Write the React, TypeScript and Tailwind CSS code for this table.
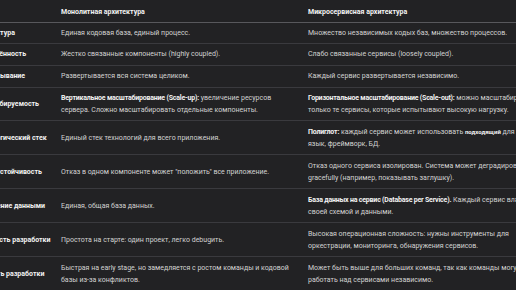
import React from "react";

type Row = {
  aspect: string;
  mono: React.ReactNode;
  micro: React.ReactNode;
};

function B({ children }: { children: React.ReactNode }) {
  return <b className="font-bold tracking-[-0.2px] text-[#f2f2f2]">{children}</b>;
}

const rows: Row[] = [
  {
    aspect: "Архитектура",
    mono: "Единая кодовая база, единый процесс.",
    micro: "Множество независимых кодых баз, множество процессов.",
  },
  {
    aspect: "Сопряжённость",
    mono: "Жестко связанные компоненты (highly coupled).",
    micro: "Слабо связанные сервисы (loosely coupled).",
  },
  {
    aspect: "Развертывание",
    mono: "Развертывается вся система целиком.",
    micro: "Каждый сервис развертывается независимо.",
  },
  {
    aspect: "Масштабируемость",
    mono: (
      <>
        <B>Вертикальное масштабирование (Scale-up):</B> увеличение ресурсов сервера. Сложно
        масштабировать отдельные компоненты.
      </>
    ),
    micro: (
      <>
        <B>Горизонтальное масштабирование (Scale-out):</B> можно масштабировать только те сервисы,
        которые испытывают высокую нагрузку.
      </>
    ),
  },
  {
    aspect: "Технологический стек",
    mono: "Единый стек технологий для всего приложения.",
    micro: (
      <>
        <B>Полиглот:</B> каждый сервис может использовать{" "}
        <b className="font-bold text-[6px] text-[#f2f2f2]">подходящий</b> для его задач язык,
        фреймворк, БД.
      </>
    ),
  },
  {
    aspect: "Отказоустойчивость",
    mono: "Отказ в одном компоненте может \"положить\" все приложение.",
    micro:
      "Отказ одного сервиса изолирован. Система может деградировать gracefully (например, показывать заглушку).",
  },
  {
    aspect: "Управление данными",
    mono: "Единая, общая база данных.",
    micro: (
      <>
        <B>База данных на сервис (Database per Service).</B> Каждый сервис владеет своей схемой и
        данными.
      </>
    ),
  },
  {
    aspect: "Сложность разработки",
    mono: "Простота на старте: один проект, легко debugить.",
    micro:
      "Высокая операционная сложность: нужны инструменты для оркестрации, мониторинга, обнаружения сервисов.",
  },
  {
    aspect: "Скорость разработки",
    mono: "Быстрая на early stage, но замедляется с ростом команды и кодовой базы из-за конфликтов.",
    micro: "Может быть выше для больших команд, так как команды могут работать над сервисами независимо.",
  },
];

export default function App() {
  return (
    <div
      className="w-[516px] h-[290px] overflow-hidden bg-[#222224] text-[#d2d2d2]"
      style={{ fontFamily: 'Roboto, "Noto Sans", sans-serif' }}
    >
      <table className="-ml-[35px] w-[594px] table-fixed border-collapse text-[7px] leading-[12.3px]">
        <colgroup>
          <col className="w-[88px]" />
          <col className="w-[247px]" />
          <col className="w-[259px]" />
        </colgroup>
        <thead>
          <tr className="border-b border-[#58585c]">
            <th className="h-[22px] px-2 pt-[2px] text-left align-middle font-bold text-[#f2f2f2]">
              Аспект
            </th>
            <th className="h-[22px] px-2 pt-[2px] text-left align-middle font-bold text-[#f2f2f2]">
              Монолитная архитектура
            </th>
            <th className="h-[22px] px-2 pt-[2px] text-left align-middle font-bold text-[#f2f2f2]">
              Микросервисная архитектура
            </th>
          </tr>
        </thead>
        <tbody>
          {rows.map((r) => (
            <tr key={r.aspect} className="border-b border-[#3a3a3e]">
              <td className="px-2 py-[4.2px] align-middle font-bold text-[#f2f2f2] whitespace-nowrap">
                {r.aspect}
              </td>
              <td className="px-2 py-[4.2px] align-middle">{r.mono}</td>
              <td className="px-2 py-[4.2px] align-middle">{r.micro}</td>
            </tr>
          ))}
        </tbody>
      </table>
    </div>
  );
}
